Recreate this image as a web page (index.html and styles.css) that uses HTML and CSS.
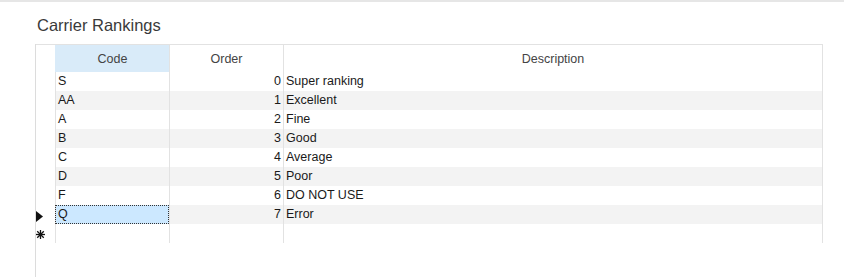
FILE: index.html
```html
<!DOCTYPE html>
<html>
<head>
<meta charset="utf-8">
<link rel="stylesheet" href="styles.css">
</head>
<body>
<div class="topbar"></div>
<h1 class="title">Carrier Rankings</h1>
<div class="frame">
  <div class="grid">
    <div class="rh"></div>
    <div class="hc code-h">Code</div>
    <div class="hc">Order</div>
    <div class="hc">Description</div>

    <div class="rh"></div><div class="c">S</div><div class="c num">0</div><div class="c">Super ranking</div>
    <div class="rh"></div><div class="c alt">AA</div><div class="c num alt">1</div><div class="c alt">Excellent</div>
    <div class="rh"></div><div class="c">A</div><div class="c num">2</div><div class="c">Fine</div>
    <div class="rh"></div><div class="c alt">B</div><div class="c num alt">3</div><div class="c alt">Good</div>
    <div class="rh"></div><div class="c">C</div><div class="c num">4</div><div class="c">Average</div>
    <div class="rh"></div><div class="c alt">D</div><div class="c num alt">5</div><div class="c alt">Poor</div>
    <div class="rh"></div><div class="c">F</div><div class="c num">6</div><div class="c">DO NOT USE</div>
    <div class="rh"><svg class="arrow" width="7" height="11" viewBox="0 0 7 11"><polygon points="0,0 7,5.5 0,11" fill="#111"/></svg></div><div class="c sel">Q</div><div class="c num alt">7</div><div class="c alt">Error</div>
    <div class="rh"><svg class="star" width="9" height="9" viewBox="0 0 9 9"><g stroke="#111" stroke-width="1.3" stroke-linecap="square"><line x1="4.5" y1="0.5" x2="4.5" y2="8.5"/><line x1="0.5" y1="4.5" x2="8.5" y2="4.5"/><line x1="1.7" y1="1.7" x2="7.3" y2="7.3"/><line x1="7.3" y1="1.7" x2="1.7" y2="7.3"/></g></svg></div><div class="c"></div><div class="c"></div><div class="c"></div>
  </div>
</div>
</body>
</html>
```

FILE: styles.css
```css
html, body {
  margin: 0;
  padding: 0;
  background: #fff;
  height: 277px;
  overflow: hidden;
  font-family: "Liberation Sans", Arial, sans-serif;
}
.topbar {
  height: 2px;
  background: #e6e6e6;
}
.title {
  margin: 14px 0 0 0;
  padding-left: 37px;
  font-size: 16.5px;
  line-height: 18px;
  font-weight: normal;
  color: #3a3a3a;
  height: 18px;
}
.frame {
  margin: 10px 0 0 35px;
  border-left: 1px solid #dcdcdc;
  height: 233px;
}
.grid {
  width: 787px;
  box-sizing: border-box;
  border-top: 1px solid #e2e2e2;
  border-right: 1px solid #e2e2e2;
  display: grid;
  grid-template-columns: 19px 114px 114px 1fr;
  grid-template-rows: 27px repeat(9, 19px);
  font-size: 12.5px;
}
.rh {
  display: flex;
  align-items: center;
}
.hc {
  border-left: 1px solid #e2e2e2;
  display: flex;
  align-items: center;
  justify-content: center;
  color: #444;
  padding-top: 1px;
}
.code-h {
  background: #d9ebf9;
  border-left-color: transparent;
}
.c {
  border-left: 1px solid #e2e2e2;
  padding: 0 2px;
  line-height: 19px;
  color: #1a1a1a;
  white-space: nowrap;
  overflow: hidden;
}
.num {
  text-align: right;
}
.alt {
  background: #f3f3f3;
}
.sel {
  background: #cce8ff;
  outline: 1px dotted #333;
  outline-offset: -1px;
}
.arrow {
  display: block;
  margin-top: 3px;
}
.star {
  display: block;
  margin-top: 1px;
}
```
